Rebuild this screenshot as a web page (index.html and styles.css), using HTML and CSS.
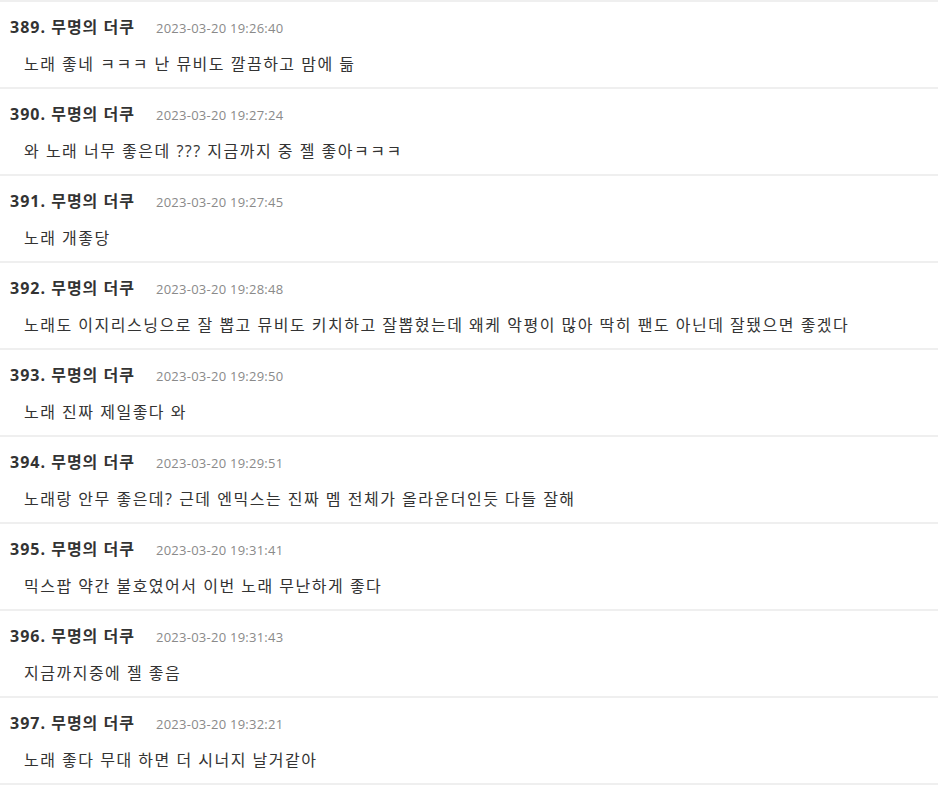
FILE: index.html
```html
<!DOCTYPE html>
<html lang="ko">
<head>
<meta charset="utf-8">
<link rel="stylesheet" href="styles.css">
</head>
<body>
<ul class="list">
  <li class="item"><div class="head"><span class="name">389. 무명의 더쿠</span><span class="date">2023-03-20 19:26:40</span></div><p class="text">노래 좋네 ㅋㅋㅋ 난 뮤비도 깔끔하고 맘에 듦</p></li>
  <li class="item"><div class="head"><span class="name">390. 무명의 더쿠</span><span class="date">2023-03-20 19:27:24</span></div><p class="text">와 노래 너무 좋은데 ??? 지금까지 중 젤 좋아ㅋㅋㅋ</p></li>
  <li class="item"><div class="head"><span class="name">391. 무명의 더쿠</span><span class="date">2023-03-20 19:27:45</span></div><p class="text">노래 개좋당</p></li>
  <li class="item"><div class="head"><span class="name">392. 무명의 더쿠</span><span class="date">2023-03-20 19:28:48</span></div><p class="text">노래도 이지리스닝으로 잘 뽑고 뮤비도 키치하고 잘뽑혔는데 왜케 악평이 많아 딱히 팬도 아닌데 잘됐으면 좋겠다</p></li>
  <li class="item"><div class="head"><span class="name">393. 무명의 더쿠</span><span class="date">2023-03-20 19:29:50</span></div><p class="text">노래 진짜 제일좋다 와</p></li>
  <li class="item"><div class="head"><span class="name">394. 무명의 더쿠</span><span class="date">2023-03-20 19:29:51</span></div><p class="text">노래랑 안무 좋은데? 근데 엔믹스는 진짜 멤 전체가 올라운더인듯 다들 잘해</p></li>
  <li class="item"><div class="head"><span class="name">395. 무명의 더쿠</span><span class="date">2023-03-20 19:31:41</span></div><p class="text">믹스팝 약간 불호였어서 이번 노래 무난하게 좋다</p></li>
  <li class="item"><div class="head"><span class="name">396. 무명의 더쿠</span><span class="date">2023-03-20 19:31:43</span></div><p class="text">지금까지중에 젤 좋음</p></li>
  <li class="item"><div class="head"><span class="name">397. 무명의 더쿠</span><span class="date">2023-03-20 19:32:21</span></div><p class="text">노래 좋다 무대 하면 더 시너지 날거같아</p></li>
</ul>
</body>
</html>
```
FILE: styles.css
```css
html, body {
  margin: 0;
  padding: 0;
  background: #fff;
}
body {
  font-family: "Open Sans", "Noto Sans CJK KR", sans-serif;
  color: #333;
}
.list {
  list-style: none;
  margin: 0;
  padding: 0;
}
.item {
  box-sizing: border-box;
  border-top: 2px solid #efefef;
  height: 87px;
  padding: 14px 10px 0;
}
.item:last-child {
  height: 89px;
  border-bottom: 2px solid #efefef;
}
.head {
  display: flex;
  align-items: baseline;
  line-height: 22px;
}
.name {
  font-size: 16px;
  font-weight: bold;
  letter-spacing: 1px;
  color: #333;
  width: 146px;
}
.date {
  font-size: 13px;
  letter-spacing: 0.25px;
  color: #8a8a8a;
}
.text {
  margin: 14px 0 0;
  padding-left: 14px;
  font-size: 16px;
  letter-spacing: 1.5px;
  line-height: 22px;
  color: #333;
}
```
